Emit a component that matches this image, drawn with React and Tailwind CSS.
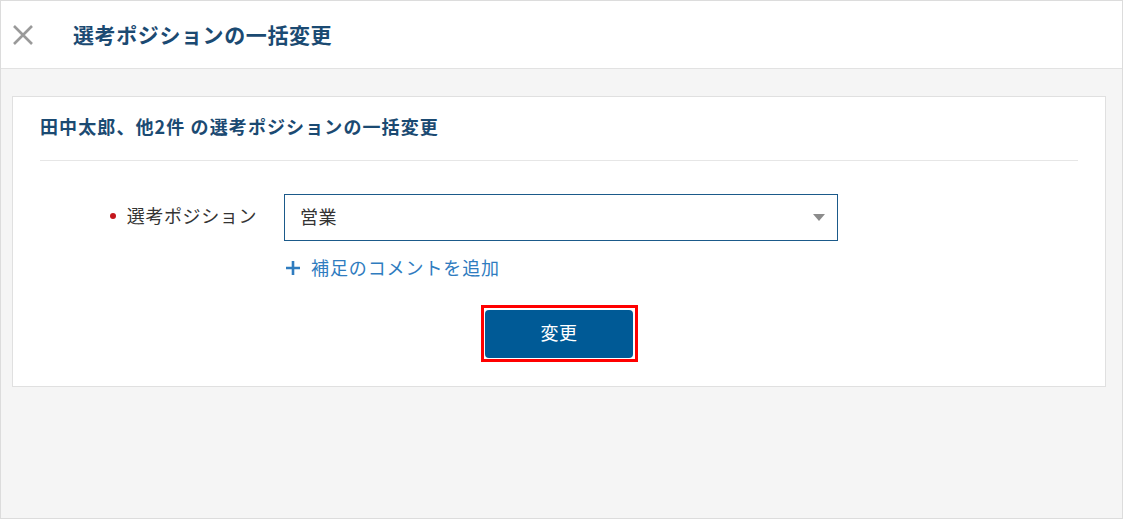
import React from 'react';

const jp = { fontFamily: '"Noto Sans CJK JP", "Noto Sans", sans-serif' };

export default function App() {
  return (
    <div style={jp} className="w-[1123px] h-[519px] flex flex-col border border-[#dcdcdc] bg-[#f5f5f5] text-[#333]">
      {/* header */}
      <div className="h-[68px] shrink-0 flex items-center bg-white border-b border-[#e2e2e2]">
        <button className="ml-[11px] w-[22px] h-[22px] flex items-center justify-center">
          <svg width="22" height="22" viewBox="0 0 22 22" fill="none" stroke="#9a9a9a" strokeWidth="2.6">
            <path d="M2 2 L20 20 M20 2 L2 20" />
          </svg>
        </button>
        <h1 className="ml-[39px] text-[21px] font-bold leading-none tracking-[0.6px] text-[#1b4a72]">選考ポジションの一括変更</h1>
      </div>

      {/* body */}
      <div className="flex-1 pl-[11px] pr-[16px] pt-[27px]">
        <div className="bg-white border border-[#e0e0e0] px-[27px] pb-[24px]">
          <div className="h-[63px] flex items-center pb-[5px]">
            <h2 className="text-[18px] font-bold leading-none tracking-[1.1px] text-[#1b4a72]">田中太郎、他2件 の選考ポジションの一括変更</h2>
          </div>
          <div className="h-px bg-[#e6e6e6]" />

          <div className="flex mt-[33px]">
            <div className="w-[244px] pr-[27px] h-[47px] pb-[4px] flex items-center justify-end text-[18px] tracking-[0.6px]">
              <span className="w-[6px] h-[6px] rounded-full bg-[#c4161c] mr-[11px]" />
              <span>選考ポジション</span>
            </div>
            <div>
              <div className="w-[554px] h-[47px] border border-[#1b5a8a] flex items-center justify-between pl-[15px] pr-[12px] text-[18px] tracking-[0.6px]">
                <span className="pb-[3px]">営業</span>
                <svg width="12" height="7" viewBox="0 0 12 7">
                  <path d="M0 0 L12 0 L6 7 Z" fill="#8c8c8c" />
                </svg>
              </div>
              <div className="mt-[16px] flex items-center h-[22px] text-[18px] tracking-[0.9px] text-[#2f7cbf]">
                <svg width="14" height="14" viewBox="0 0 14 14" className="ml-[2px] mr-[11px]">
                  <path d="M7 0 V14 M0 7 H14" stroke="#2f7cbf" strokeWidth="2.6" />
                </svg>
                <span className="pb-[1px]">補足のコメントを追加</span>
              </div>
            </div>
          </div>

          <div className="flex justify-center mt-[26px]">
            <div className="border-[3px] border-[#ff0000] p-[1.5px]">
              <button className="w-[148px] h-[48px] pb-[2px] rounded-[4px] bg-[#005a96] text-white text-[18px] tracking-[0.6px]">変更</button>
            </div>
          </div>
        </div>
      </div>
    </div>
  );
}
